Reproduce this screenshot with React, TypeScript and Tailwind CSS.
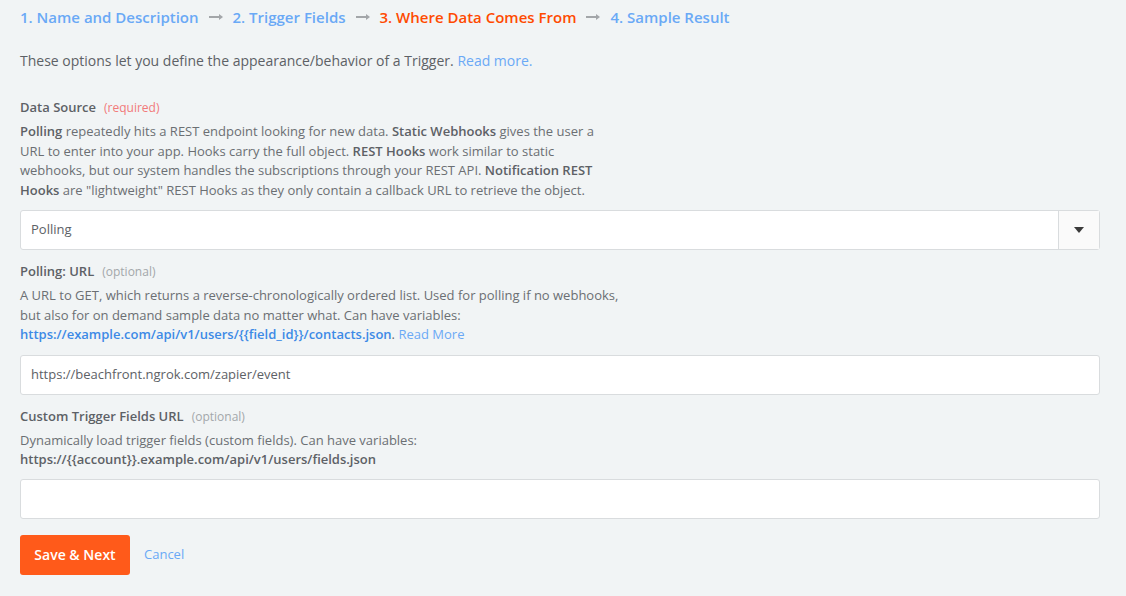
import React from "react";

const Arrow = () => (
  <span className="mx-[10px] inline-flex items-center">
    <svg width="14" height="8" viewBox="0 0 14 8">
      <path d="M0 4h11" stroke="#a3a6a9" strokeWidth="2" />
      <path d="M10 1l4 3-4 3z" fill="#a3a6a9" />
    </svg>
  </span>
);

export default function App() {
  return (
    <div
      className="min-h-[596px] w-[1126px] bg-[#f1f4f5] text-[#5f6368]"
      style={{ fontFamily: '"Open Sans", "Liberation Sans", sans-serif' }}
    >
      <div className="px-5 pt-[6px]">
        <div className="flex items-center text-[15px] font-semibold leading-[22px]">
          <span className="text-[#6aa9f6]">1. Name and Description</span>
          <Arrow />
          <span className="text-[#6aa9f6]">2. Trigger Fields</span>
          <Arrow />
          <span className="text-[#ff4a00]">3. Where Data Comes From</span>
          <Arrow />
          <span className="text-[#6aa9f6]">4. Sample Result</span>
        </div>

        <p className="mt-[23px] text-[14px] leading-[20px] text-[#5d6166]">
          These options let you define the appearance/behavior of a Trigger.{" "}
          <span className="text-[#6aa9f6]">Read more.</span>
        </p>

        <div className="mt-[26px] text-[13px] leading-[20px]">
          <span className="font-semibold text-[#5d6166]">Data Source</span>
          <span className="ml-[8px] text-[12px] text-[#f27a7a]">(required)</span>
        </div>
        <p className="mt-[4px] w-[590px] text-[13px] leading-[19.5px] text-[#6b6f73]">
          <b className="font-semibold text-[#5d6166]">Polling</b> repeatedly hits a REST endpoint looking for new data.{" "}
          <b className="font-semibold text-[#5d6166]">Static Webhooks</b> gives the user a URL to enter into your app. Hooks carry the full object.{" "}
          <b className="font-semibold text-[#5d6166]">REST Hooks</b> work similar to static webhooks, but our system handles the subscriptions through your REST API.{" "}
          <b className="font-semibold text-[#5d6166]">Notification REST Hooks</b> are "lightweight" REST Hooks as they only contain a callback URL to retrieve the object.
        </p>

        <div className="mt-[10px] flex h-[40px] w-[1080px] rounded-[3px] border border-[#d9dcde] bg-white">
          <div className="flex flex-1 items-center px-[10px] text-[13px] text-[#5d6166]">Polling</div>
          <div className="flex w-[41px] items-center justify-center border-l border-[#d9dcde] bg-[#fafafa]">
            <svg width="10" height="6" viewBox="0 0 10 6">
              <path d="M0 0h10L5 6z" fill="#3b3b3b" />
            </svg>
          </div>
        </div>

        <div className="mt-[11px] text-[13px] leading-[20px]">
          <span className="font-semibold text-[#5d6166]">Polling: URL</span>
          <span className="ml-[8px] text-[12px] text-[#a3a7aa]">(optional)</span>
        </div>
        <p className="mt-[4px] text-[13px] leading-[19.5px] text-[#6b6f73]">
          A URL to GET, which returns a reverse-chronologically ordered list. Used for polling if no webhooks,
          <br />
          but also for on demand sample data no matter what. Can have variables:
          <br />
          <span className="font-semibold text-[#3d8ae6]">https://example.com/api/v1/users/{"{{field_id}}"}/contacts.json</span>.{" "}
          <span className="text-[#6aa9f6]">Read More</span>
        </p>

        <div className="mt-[10px] flex h-[40px] w-[1080px] items-center rounded-[3px] border border-[#d9dcde] bg-white px-[10px] text-[13px] text-[#5d6166]">
          https://beachfront.ngrok.com/zapier/event
        </div>

        <div className="mt-[11px] text-[13px] leading-[20px]">
          <span className="font-semibold text-[#5d6166]">Custom Trigger Fields URL</span>
          <span className="ml-[8px] text-[12px] text-[#a3a7aa]">(optional)</span>
        </div>
        <p className="mt-[4px] text-[13px] leading-[19.5px] text-[#6b6f73]">
          Dynamically load trigger fields (custom fields). Can have variables:
          <br />
          <span className="font-semibold text-[#5d6166]">https://{"{{account}}"}.example.com/api/v1/users/fields.json</span>
        </p>

        <div className="mt-[9px] h-[40px] w-[1080px] rounded-[3px] border border-[#d9dcde] bg-white" />

        <div className="mt-[16px] flex items-center">
          <button className="h-[40px] w-[110px] rounded-[3px] bg-[#ff5a1a] text-[14px] font-semibold text-white">
            Save &amp; Next
          </button>
          <span className="ml-[14px] text-[13px] text-[#6aa9f6]">Cancel</span>
        </div>
      </div>
    </div>
  );
}
